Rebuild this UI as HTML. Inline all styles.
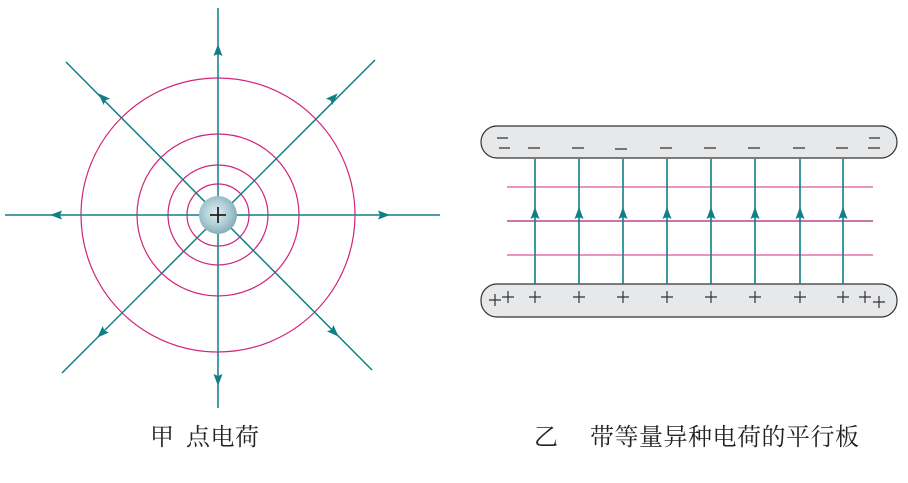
<!DOCTYPE html>
<html><head><meta charset="utf-8"><style>
html,body{margin:0;padding:0;background:#fff;width:908px;height:483px;overflow:hidden}
.t{position:absolute;font-family:"Liberation Serif","Noto Serif CJK SC",serif;font-size:24px;line-height:28px;color:#222;top:424px;letter-spacing:0.5px}
</style></head><body>
<svg width="908" height="483" style="position:absolute;left:0;top:0">
<defs>
<radialGradient id="g" cx="0.45" cy="0.45" r="0.6">
<stop offset="0" stop-color="#e3eef1"/><stop offset="0.6" stop-color="#a9c9d2"/><stop offset="1" stop-color="#7fa6b2"/>
</radialGradient>
<g id="ar"><path d="M0,-8 L4.5,4 L0,2 L-4.5,4Z" fill="#0f7f86"/></g>
</defs>
<g fill="none" stroke="#d2237a" stroke-width="1.2">
<circle cx="218" cy="215" r="137"/>
<circle cx="218" cy="215" r="81"/>
<circle cx="218" cy="215" r="50"/>
<circle cx="218" cy="215" r="31"/>
</g>
<g stroke="#0f7f86" stroke-width="1.5">
<line x1="218" y1="8" x2="218" y2="408"/>
<line x1="5" y1="215" x2="440" y2="215"/>
<line x1="66" y1="62" x2="372" y2="370"/>
<line x1="375" y1="60" x2="62" y2="373"/>
</g>
<use href="#ar" transform="translate(218,52)"/>
<use href="#ar" transform="translate(218,378) rotate(180)"/>
<use href="#ar" transform="translate(58,215) rotate(-90)"/>
<use href="#ar" transform="translate(382,215) rotate(90)"/>
<use href="#ar" transform="translate(104,99) rotate(-45)"/>
<use href="#ar" transform="translate(332,99) rotate(45)"/>
<use href="#ar" transform="translate(103,332) rotate(-135)"/>
<use href="#ar" transform="translate(333,331) rotate(135)"/>
<circle cx="218" cy="215" r="19" fill="url(#g)"/>
<path d="M210,215H226M218,207V223" stroke="#222" stroke-width="1.8"/>

<rect x="481" y="126" width="416" height="32" rx="16" fill="#e6e8ea" stroke="#333" stroke-width="1.2"/>
<rect x="481" y="284" width="416" height="33" rx="16" fill="#e6e8ea" stroke="#333" stroke-width="1.2"/>
<g stroke-width="1.3">
<line x1="507" y1="187" x2="873" y2="187" stroke="#e0559a"/>
<line x1="507" y1="221" x2="873" y2="221" stroke="#b0206f"/>
<line x1="507" y1="255" x2="873" y2="255" stroke="#e0559a"/>
</g>
<g stroke="#0f7f86" stroke-width="1.6">
<line x1="535" y1="159" x2="535" y2="284"/><line x1="579" y1="159" x2="579" y2="284"/>
<line x1="623" y1="159" x2="623" y2="284"/><line x1="667" y1="159" x2="667" y2="284"/>
<line x1="711" y1="159" x2="711" y2="284"/><line x1="755" y1="159" x2="755" y2="284"/>
<line x1="800" y1="159" x2="800" y2="284"/><line x1="843" y1="159" x2="843" y2="284"/>
</g>
<g>
<use href="#ar" transform="translate(535,215)"/><use href="#ar" transform="translate(579,215)"/>
<use href="#ar" transform="translate(623,215)"/><use href="#ar" transform="translate(667,215)"/>
<use href="#ar" transform="translate(711,215)"/><use href="#ar" transform="translate(755,215)"/>
<use href="#ar" transform="translate(800,215)"/><use href="#ar" transform="translate(843,215)"/>
</g>
<g stroke="#333" stroke-width="1.2">
<path d="M497,138h11M499,148h11M528,148h12M572,148h12M615,149h12M660,148h12M704,148h12M748,148h12M793,148h12M836,148h12M868,148h12M869,138h11"/>
<path d="M489,300h12M495,294v12M502,297h12M508,291v12M529,297h12M535,291v12M573,297h12M579,291v12M617,297h12M623,291v12M661,297h12M667,291v12M705,297h12M711,291v12M749,297h12M755,291v12M794,297h12M800,291v12M837,297h12M843,291v12M859,297h12M865,291v12M873,302h12M879,296v12"/>
</g>
</svg>
<div class="t" style="left:150px">甲</div>
<div class="t" style="left:186px">点电荷</div>
<div class="t" style="left:534px">乙</div>
<div class="t" style="left:590px">带等量异种电荷的平行板</div>
</body></html>
